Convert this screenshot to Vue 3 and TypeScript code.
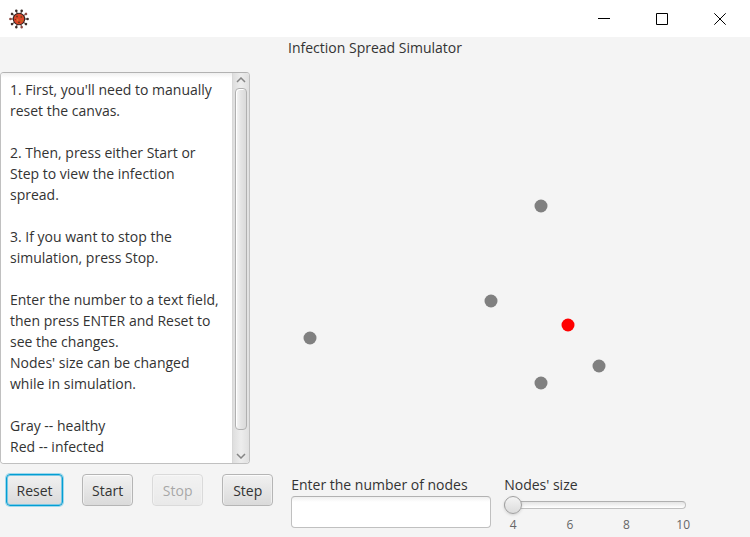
<script setup lang="ts">
import { ref } from 'vue'

interface SimNode {
  x: number
  y: number
  infected: boolean
}

const instructions: string = [
  "1. First, you'll need to manually reset the canvas.",
  '',
  '2. Then, press either Start or Step to view the infection spread.',
  '',
  '3. If you want to stop the simulation, press Stop.',
  '',
  'Enter the number to a text field, then press ENTER and Reset to see the changes.',
  "Nodes' size can be changed while in simulation.",
  '',
  'Gray -- healthy',
  'Red -- infected',
].join('\n')

const nodes = ref<SimNode[]>([
  { x: 291, y: 134, infected: false },
  { x: 241, y: 229, infected: false },
  { x: 60, y: 266, infected: false },
  { x: 318, y: 253, infected: true },
  { x: 349, y: 294, infected: false },
  { x: 291, y: 311, infected: false },
])

const running = ref<boolean>(false)
const nodeCount = ref<string>('')
const nodeSize = ref<number>(4)
const ticks: number[] = [4, 6, 8, 10]
const spikes: number[] = [18, 54, 90, 126, 162, 198, 234, 270, 306, 342]
const help = ref<HTMLTextAreaElement | null>(null)

function scrollHelp(delta: number): void {
  help.value?.scrollBy({ top: delta })
}

function reset(): void {
  running.value = false
  const count = parseInt(nodeCount.value, 10)
  if (!count || count < 1) return
  nodes.value = Array.from({ length: count }, (_, i) => ({
    x: 10 + Math.round(Math.random() * 480),
    y: 10 + Math.round(Math.random() * 370),
    infected: i === 0,
  }))
}

function step(): void {
  for (const n of nodes.value) {
    n.x = Math.min(490, Math.max(10, n.x + Math.round(Math.random() * 10 - 5)))
    n.y = Math.min(380, Math.max(10, n.y + Math.round(Math.random() * 10 - 5)))
  }
}
</script>

<template>
  <div class="window">
    <header class="titlebar">
      <svg class="logo" viewBox="0 0 20 20" aria-hidden="true">
        <g v-for="(angle, i) in spikes" :key="angle" :transform="`rotate(${angle} 10 10)`">
          <path d="M10 5V2" stroke="#3a2c28" stroke-width="0.9" />
          <circle cx="10" cy="1.4" r="1.3" :fill="i % 3 === 1 ? '#8f4a42' : '#3a2c28'" />
        </g>
        <circle cx="10" cy="10" r="5.7" fill="#dc4629" stroke="#3a2420" stroke-width="1.1" />
        <circle cx="8" cy="7.5" r="0.9" fill="#6a3512" />
        <circle cx="12.3" cy="8" r="0.9" fill="#7a4a14" />
        <circle cx="8.7" cy="11" r="0.8" fill="#d9962a" />
        <circle cx="10" cy="13.3" r="0.9" fill="#5d3a12" />
        <circle cx="12.8" cy="11.8" r="0.9" fill="#b8791e" />
        <circle cx="6.3" cy="10.6" r="0.7" fill="#7c2417" />
      </svg>
      <div class="window-buttons">
        <button type="button" aria-label="Minimize">
          <svg viewBox="0 0 12 12"><path d="M0 5.5H12" /></svg>
        </button>
        <button type="button" aria-label="Maximize">
          <svg viewBox="0 0 12 12"><path d="M.5 .5H11.5V11.5H.5Z" /></svg>
        </button>
        <button type="button" aria-label="Close">
          <svg viewBox="0 0 12 12"><path d="M.3 .3L11.7 11.7M11.7 .3L.3 11.7" /></svg>
        </button>
      </div>
    </header>

    <h1 class="title">Infection Spread Simulator</h1>

    <main class="workspace">
      <div class="help">
        <textarea ref="help" class="help-text" aria-label="Instructions" readonly :value="instructions"></textarea>
        <div class="scrollbar">
          <button type="button" aria-label="Scroll up" @click="scrollHelp(-21)">
            <svg viewBox="0 0 10 6"><path d="M1 5L5 1L9 5" /></svg>
          </button>
          <div class="scroll-track"><div class="scroll-thumb"></div></div>
          <button type="button" aria-label="Scroll down" @click="scrollHelp(21)">
            <svg viewBox="0 0 10 6"><path d="M1 1L5 5L9 1" /></svg>
          </button>
        </div>
      </div>
      <svg class="canvas" viewBox="0 0 500 392" preserveAspectRatio="xMinYMin meet" role="img" aria-label="Nodes">
        <circle
          v-for="(n, i) in nodes"
          :key="i"
          :cx="n.x"
          :cy="n.y"
          :r="nodeSize + 2.5"
          :fill="n.infected ? '#ff0000' : '#808080'"
        />
      </svg>
    </main>

    <footer class="controls">
      <div class="actions">
        <button type="button" class="btn focused" @click="reset">Reset</button>
        <button type="button" class="btn" @click="running = true">Start</button>
        <button type="button" class="btn" :disabled="!running" @click="running = false">Stop</button>
        <button type="button" class="btn" @click="step">Step</button>
      </div>
      <div class="field">
        <label for="node-count">Enter the number of nodes</label>
        <input id="node-count" v-model="nodeCount" class="count" type="text" @keyup.enter="reset" />
      </div>
      <div class="field size">
        <label for="node-size">Nodes' size</label>
        <div class="slider">
          <span class="rail"></span>
          <input id="node-size" v-model.number="nodeSize" type="range" min="4" max="10" />
        </div>
        <div class="ticks">
          <span v-for="t in ticks" :key="t">{{ t }}</span>
        </div>
      </div>
    </footer>
  </div>
</template>

<style>
body {
  background: #f4f4f4;
}
</style>

<style scoped>
.window {
  display: flex;
  flex-direction: column;
  min-height: 100vh;
  background: #f4f4f4;
  color: #333;
  font-family: "Open Sans", "Noto Sans", sans-serif;
  font-size: 14px;
  line-height: 21px;
}

button,
input,
textarea {
  box-sizing: border-box;
  margin: 0;
  color: inherit;
  font: inherit;
}

.titlebar {
  display: flex;
  align-items: center;
  justify-content: space-between;
  height: 37px;
  padding: 0 1px 0 9px;
  background: #fff;
}

.logo {
  width: 20px;
  height: 20px;
}

.window-buttons {
  display: flex;
  height: 100%;
}

.window-buttons button {
  display: grid;
  place-items: center;
  width: 58px;
  padding: 0;
  border: 0;
  background: transparent;
}

.window-buttons svg {
  width: 12px;
  height: 12px;
  fill: none;
  stroke: #000;
  stroke-width: 1;
}

.title {
  margin: 0 0 14px;
  font-size: 14px;
  font-weight: 400;
  line-height: 21px;
  text-align: center;
}

.workspace {
  display: grid;
  flex: 1;
  grid-template-columns: 250px 1fr;
}

.help {
  display: flex;
  min-height: 392px;
  box-sizing: border-box;
  overflow: hidden;
  border: 1px solid #c0c0c0;
  border-top-color: #b2b2b2;
  border-radius: 4px;
  background: #fff;
}

.help-text {
  flex: 1;
  min-width: 0;
  padding: 6px 8px 0 9px;
  overflow: hidden;
  resize: none;
  border: 0;
  outline: 0;
  background: linear-gradient(#f0f0f0, #fff 5px);
  line-height: 21px;
}

.scrollbar {
  display: flex;
  flex-direction: column;
  width: 17px;
  box-sizing: border-box;
  border-left: 1px solid #d8d8d8;
  background: linear-gradient(90deg, #dedede, #ededed 50%, #e0e0e0);
}

.scrollbar button {
  display: grid;
  place-items: center;
  height: 14px;
  padding: 0;
  border: 0;
  background: transparent;
}

.scrollbar svg {
  width: 10px;
  height: 6px;
  fill: none;
  stroke: #858585;
  stroke-width: 1.5;
}

.scroll-track {
  flex: 1;
  padding: 1px 2px;
}

.scroll-thumb {
  box-sizing: border-box;
  height: 95%;
  border: 1px solid #b0b0b0;
  border-radius: 4px;
  background: linear-gradient(90deg, #f6f6f6, #e4e4e4 50%, #dadada);
  box-shadow: inset 1px 1px 0 #fff;
}

.canvas {
  width: 100%;
  height: 100%;
}

.controls {
  display: flex;
  align-items: flex-start;
  padding: 10px 6px 3px;
}

.actions {
  display: flex;
  gap: 19px;
  margin-right: 18px;
}

.btn {
  min-width: 51px;
  height: 32px;
  padding: 0 9px;
  border: 1px solid #b5b5b5;
  border-radius: 4px;
  background: linear-gradient(#f1f1f1, #dadada);
  box-shadow: inset 0 1px 0 #fcfcfc, inset 1px 0 0 #f0f0f0, inset -1px 0 0 #f0f0f0;
}

.btn.focused {
  min-width: 57px;
  border-color: #039ed3;
  box-shadow: 0 0 0 1px #9fd8ec, inset 0 0 0 1px #7cc8e4;
}

.btn:disabled {
  opacity: 0.4;
}

.field {
  display: flex;
  flex-direction: column;
}

.count {
  width: 200px;
  height: 32px;
  margin-top: 1px;
  padding: 0 9px;
  border: 1px solid #c0c0c0;
  border-top-color: #b2b2b2;
  border-radius: 4px;
  background: linear-gradient(#f0f0f0, #fff 5px);
}

.size {
  width: 188px;
  margin-left: 13px;
}

.slider {
  display: grid;
  align-items: center;
  height: 20px;
}

.slider > * {
  grid-area: 1 / 1;
}

.rail {
  height: 8px;
  margin-right: 6px;
  box-sizing: border-box;
  border: 1px solid #c0c0c0;
  border-top-color: #b0b0b0;
  border-radius: 4px;
  background: linear-gradient(#e4e4e4, #fff);
}

.slider input {
  width: 100%;
  height: 18px;
  appearance: none;
  background: transparent;
}

.slider input::-webkit-slider-thumb {
  width: 18px;
  height: 18px;
  appearance: none;
  border: 1px solid #a0a0a0;
  border-radius: 50%;
  background: linear-gradient(#f4f4f4, #dcdcdc);
  box-shadow: 0 1px 3px rgba(0, 0, 0, 0.15);
}

.ticks {
  display: flex;
  justify-content: space-between;
  color: #666;
  font-size: 12px;
  line-height: 20px;
}

.ticks span {
  width: 18px;
  text-align: center;
}
</style>
